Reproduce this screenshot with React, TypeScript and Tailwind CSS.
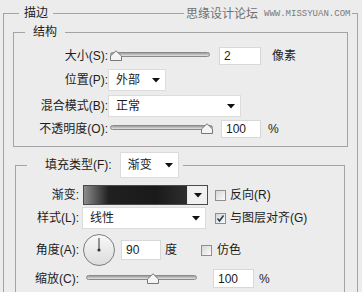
import React from "react";

const Arrow = () => (
    <svg width="8" height="5" viewBox="0 0 8 5" className="shrink-0">
        <path d="M0 0 H8 L4 4.5 Z" fill="#111" />
    </svg>
);

const Select = ({ value, className }: { value: string; className: string }) => (
    <div
        className={`flex items-center justify-between bg-white border border-[#dcdcdc] pl-[7px] pr-[5px] ${className}`}
    >
        <span>{value}</span>
        <Arrow />
    </div>
);

const NumBox = ({ value, className }: { value: string; className: string }) => (
    <div
        className={`flex items-center bg-white border border-[#d8d8d8] pl-[4px] text-[12px] ${className}`}
    >
        {value}
    </div>
);

const Slider = ({ value, className }: { value: number; className: string }) => (
    <div className={`relative h-[14px] ${className}`}>
        <div className="absolute inset-x-0 top-[3px] h-[5px] rounded-full border border-[#8a8a8a] bg-linear-to-b from-[#9c9c9c] to-[#e4e4e4]" />
        <svg
            width="12"
            height="11"
            viewBox="0 0 12 11"
            className="absolute top-[1px]"
            style={{ left: `calc((100% - 12px) * ${value / 100})` }}
        >
            <path
                d="M0.5 10.5 V6 L6 0.8 L11.5 6 V10.5 Z"
                fill="#f4f4f4"
                stroke="#777"
            />
        </svg>
    </div>
);

const Check = ({ checked }: { checked?: boolean }) => (
    <div className="w-[11px] h-[11px] shrink-0 border border-[#8f8f8f] bg-linear-to-br from-[#d6d6d6] to-[#fbfbfb] flex items-center justify-center">
        {checked && (
            <svg width="9" height="9" viewBox="0 0 9 9">
                <path
                    d="M1.5 4.5 L3.5 7 L7.5 1.5"
                    fill="none"
                    stroke="#2d3c5c"
                    strokeWidth="1.6"
                />
            </svg>
        )}
    </div>
);

const Dial = () => (
    <svg width="32" height="32" viewBox="0 0 32 32" className="shrink-0">
        <defs>
            <linearGradient id="dialBg" x1="0" y1="0" x2="0" y2="1">
                <stop offset="0" stopColor="#f8f8f8" />
                <stop offset="1" stopColor="#dcdcdc" />
            </linearGradient>
        </defs>
        <circle cx="16" cy="16" r="15.5" fill="url(#dialBg)" stroke="#7d7d7d" />
        <line x1="16" y1="4" x2="16" y2="16" stroke="#333" strokeWidth="1" />
        <circle cx="16" cy="16" r="1.6" fill="#333" />
    </svg>
);

export default function App() {
    return (
        <div className="relative w-[362px] h-[292px] overflow-hidden bg-[#ececec] text-[12px] text-[#1c1c1c] font-['Liberation_Sans','Noto_Sans_CJK_SC',sans-serif] pt-[4px]">
            {/* watermark over the top border */}
            <div className="absolute left-[184px] top-[6px] flex items-center gap-[6px] bg-[#ececec] px-[2px] leading-[16px]">
                <span className="text-[#707070]">思缘设计论坛</span>
                <span className="font-['Liberation_Mono',monospace] text-[9px] text-[#7a7a7a]">
                    WWW.MISSYUAN.COM
                </span>
            </div>

            <fieldset className="ml-[3px] w-[355px] h-[300px] border border-[#a3a3a3] px-[9px]">
                <legend className="ml-[6px] px-[5px] leading-[18px]">描边</legend>

                {/* 结构 */}
                <fieldset className="mt-[1px] border border-[#a3a3a3] pt-[6px] pb-[8px]">
                    <legend className="ml-[11px] px-[8px] leading-[18px]">结构</legend>

                    <div className="flex items-center h-[18px]">
                        <span className="w-[94px] text-right">大小(S):</span>
                        <Slider value={0} className="ml-[2px] w-[100px]" />
                        <NumBox value="2" className="ml-[9px] w-[42px] h-[18px]" />
                        <span className="ml-[11px]">像素</span>
                    </div>

                    <div className="flex items-center h-[22px] mt-[4px]">
                        <span className="w-[94px] text-right">位置(P):</span>
                        <Select value="外部" className="w-[58px] h-[22px]" />
                    </div>

                    <div className="flex items-center h-[22px] mt-[4px]">
                        <span className="w-[94px] text-right">混合模式(B):</span>
                        <Select value="正常" className="w-[133px] h-[22px]" />
                    </div>

                    <div className="flex items-center h-[18px] mt-[3px]">
                        <span className="w-[94px] text-right">不透明度(O):</span>
                        <Slider value={100} className="ml-[2px] w-[103px]" />
                        <NumBox value="100" className="ml-[8px] w-[40px] h-[18px]" />
                        <span className="ml-[7px]">%</span>
                    </div>
                </fieldset>

                {/* 填充类型 */}
                <fieldset className="mt-[5px] ml-[2px] mr-[3px] border border-[#a3a3a3] h-[200px]">
                    <legend className="ml-[11px] pl-[18px] pr-[4px]">
                        <div className="flex items-center h-[26px]">
                            <span>填充类型(F):</span>
                            <Select value="渐变" className="ml-[8px] w-[59px] h-[26px]" />
                        </div>
                    </legend>

                    <div className="flex items-center h-[20px] mt-[7px]">
                        <span className="w-[63px] text-right">渐变:</span>
                        <div className="ml-[4px] flex w-[125px] h-[20px] border border-[#4a4a4a]">
                            <div className="flex-1 border-r border-[#e8e8e8] bg-[linear-gradient(to_right,#8c8c8c,#202020_24%,#1a1a1a_70%,#2e2e2e)]" />
                            <div className="w-[19px] flex items-center justify-center bg-[#f0f0f0]">
                                <Arrow />
                            </div>
                        </div>
                        <div className="ml-[7px] flex items-center gap-[4px]">
                            <Check />
                            <span>反向(R)</span>
                        </div>
                    </div>

                    <div className="flex items-center h-[22px] mt-[2px]">
                        <span className="w-[63px] text-right">样式(L):</span>
                        <Select value="线性" className="ml-[3px] w-[124px] h-[22px]" />
                        <div className="ml-[9px] flex items-center gap-[4px]">
                            <Check checked />
                            <span>与图层对齐(G)</span>
                        </div>
                    </div>

                    <div className="flex items-center h-[32px] mt-[5px]">
                        <span className="w-[63px] text-right">角度(A):</span>
                        <div className="ml-[4px]">
                            <Dial />
                        </div>
                        <NumBox value="90" className="ml-[6px] w-[40px] h-[20px]" />
                        <span className="ml-[4px]">度</span>
                        <div className="ml-[24px] flex items-center gap-[5px]">
                            <Check />
                            <span>仿色</span>
                        </div>
                    </div>

                    <div className="flex items-center h-[19px] mt-[3px]">
                        <span className="w-[63px] text-right">缩放(C):</span>
                        <Slider value={62} className="ml-[7px] w-[111px]" />
                        <NumBox value="100" className="ml-[16px] w-[41px] h-[19px]" />
                        <span className="ml-[5px]">%</span>
                    </div>
                </fieldset>
            </fieldset>
        </div>
    );
}
